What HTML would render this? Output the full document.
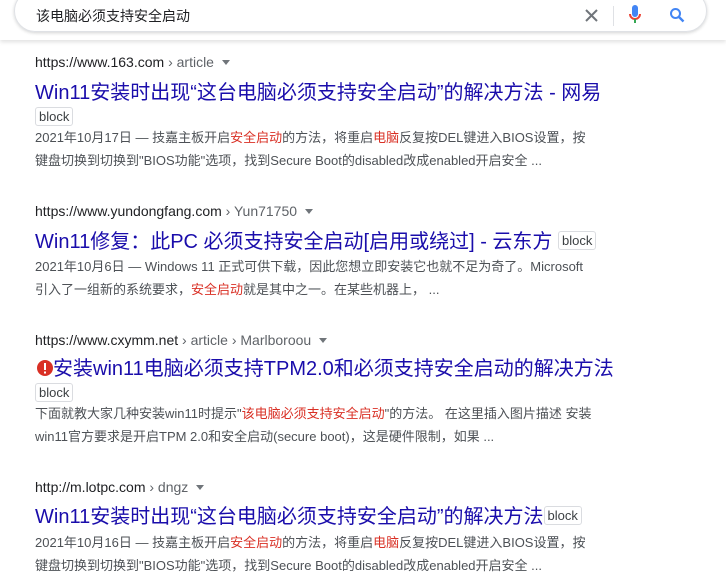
<!DOCTYPE html><html><head><meta charset="utf-8"><style>
body{margin:0;width:726px;height:583px;overflow:hidden;background:#fff;font-family:"Liberation Sans","Noto Sans CJK SC",sans-serif;position:relative}
.hdr{position:absolute;left:0;top:0;width:726px;height:40px;background:#fff;box-shadow:0 2px 4px rgba(0,0,0,.12)}
.box{position:absolute;left:14px;top:-10px;width:691px;height:40px;border:1px solid #dfe1e5;border-radius:22px;box-shadow:0 1px 3px rgba(32,33,36,.2)}
.q{position:absolute;left:36px;top:6px;font-size:14px;color:#202124}
.a{position:absolute;left:35px;white-space:nowrap}
.u{font-size:14px;color:#202124}.u span{color:#5f6368}
.t{font-size:20px;color:#1a0dab}
.b{display:inline-block;font-size:13px;color:#3c4043;border:1px solid #dadce0;border-radius:3px;padding:0 3px;line-height:17px;vertical-align:3px}
.s{font-size:13px;color:#4d5156;line-height:23px}
.r{color:#d93025}
.tri{display:inline-block;border:4px solid transparent;border-top:5px solid #70757a;margin-left:8px;vertical-align:-2px}
</style></head><body>
<div class="hdr"><div class="box"></div>
<div class="q">该电脑必须支持安全启动</div>
<svg style="position:absolute;left:585px;top:9px" width="13" height="13" viewBox="0 0 13 13"><path d="M1 1L12 12M12 1L1 12" stroke="#70757a" stroke-width="2"/></svg>
<div style="position:absolute;left:613px;top:6px;width:1px;height:20px;background:#dfe1e5"></div>
<svg style="position:absolute;left:629px;top:5px" width="12" height="20" viewBox="0 0 12 20"><rect x="3" y="0" width="6" height="12" rx="3" fill="#4285f4"/><path d="M1 9a5 5 0 0 0 10 0" stroke="#ea4335" stroke-width="2" fill="none"/><path d="M6 14v4" stroke="#34a853" stroke-width="2"/></svg>
<svg style="position:absolute;left:669px;top:7px" width="16" height="16" viewBox="0 0 16 16"><circle cx="6.5" cy="6.5" r="4.5" stroke="#4285f4" stroke-width="2" fill="none"/><path d="M10 10l4.5 4.5" stroke="#4285f4" stroke-width="2.4"/></svg>
</div>
<div class="a u" style="top:54px">https://www.163.com <span>› article</span><i class="tri"></i></div>
<div class="a t" style="top:76px">Win11安装时出现“这台电脑必须支持安全启动”的解决方法 - 网易</div>
<div class="a" style="top:107px"><span class="b">block</span></div>
<div class="a s" style="top:126px">2021年10月17日 — 技嘉主板开启<span class="r">安全启动</span>的方法，将重启<span class="r">电脑</span>反复按DEL键进入BIOS设置，按<br>键盘切换到切换到"BIOS功能"选项，找到Secure Boot的disabled改成enabled开启安全 ...</div>
<div class="a u" style="top:203px">https://www.yundongfang.com <span>› Yun71750</span><i class="tri"></i></div>
<div class="a t" style="top:225px">Win11修复：此PC 必须支持安全启动[启用或绕过] - 云东方 <span class="b">block</span></div>
<div class="a s" style="top:255px">2021年10月6日 — Windows 11 正式可供下载，因此您想立即安装它也就不足为奇了。Microsoft<br>引入了一组新的系统要求，<span class="r">安全启动</span>就是其中之一。在某些机器上， ...</div>
<div class="a u" style="top:332px">https://www.cxymm.net <span>› article › Marlboroou</span><i class="tri"></i></div>
<div class="a t" style="top:352px;left:37px"><svg width="16" height="16" viewBox="0 0 16 16" style="vertical-align:-1px"><circle cx="8" cy="8" r="8" fill="#d93025"/><rect x="7" y="3" width="2" height="7" fill="#fff"/><rect x="7" y="11.5" width="2" height="2" fill="#fff"/></svg>安装win11电脑必须支持TPM2.0和必须支持安全启动的解决方法</div>
<div class="a" style="top:383px"><span class="b">block</span></div>
<div class="a s" style="top:402px">下面就教大家几种安装win11时提示"<span class="r">该电脑必须支持安全启动</span>"的方法。 在这里插入图片描述 安装<br>win11官方要求是开启TPM 2.0和安全启动(secure boot)，这是硬件限制，如果 ...</div>
<div class="a u" style="top:479px">http://m.lotpc.com <span>› dngz</span><i class="tri"></i></div>
<div class="a t" style="top:500px">Win11安装时出现“这台电脑必须支持安全启动”的解决方法<span class="b">block</span></div>
<div class="a s" style="top:531px">2021年10月16日 — 技嘉主板开启<span class="r">安全启动</span>的方法，将重启<span class="r">电脑</span>反复按DEL键进入BIOS设置，按<br>键盘切换到切换到"BIOS功能"选项，找到Secure Boot的disabled改成enabled开启安全 ...</div>
</body></html>
